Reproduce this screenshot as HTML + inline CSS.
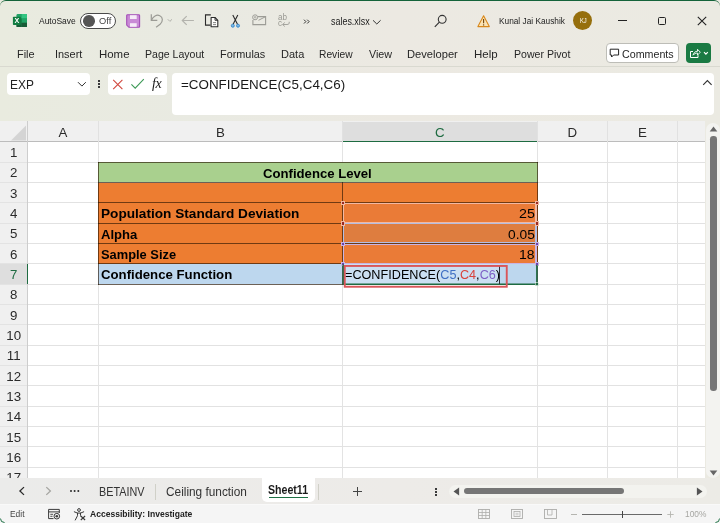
<!DOCTYPE html>
<html>
<head>
<meta charset="utf-8">
<title>sales.xlsx - Excel</title>
<style>
html,body{margin:0;padding:0;}
body{width:720px;height:523px;overflow:hidden;position:relative;background:linear-gradient(90deg,#e9ebdf 0,#e9eae2 28%,#ece9e2 55%,#ebeae2 100%);font-family:"Liberation Sans",sans-serif;color:#1f1f1f;}
.abs{position:absolute;}
.t{position:absolute;white-space:nowrap;line-height:1;}
#win{position:absolute;left:0;top:0;width:720px;height:523px;box-sizing:border-box;border-top:1.2px solid #14633a;border-radius:6px 6px 0 0;}
.tb{font-size:9.3px;color:#222;}
.menu{font-size:11.2px;color:#262626;top:49px;}
#sheet{position:absolute;left:0;top:121px;width:720px;height:360px;background:#fff;overflow:hidden;}
#colhdr{position:absolute;left:0;top:0;width:690px;height:21px;background:#f0f0f0;}
#rowhdr{position:absolute;left:0;top:0;width:27px;height:360px;background:#f0f0f0;}
.ch{position:absolute;top:0;height:21px;border-right:1px solid #d9d9d9;box-sizing:border-box;}
.cht{position:absolute;top:4px;font-size:13.5px;line-height:1;color:#333;white-space:nowrap;}
.rh{position:absolute;left:0;width:27px;height:20.3px;box-sizing:border-box;}
.rht{position:absolute;font-size:14px;line-height:1;color:#333;white-space:nowrap;}
.hl{position:absolute;left:27px;width:663px;height:1px;background:#e4e4e4;}
.vl{position:absolute;top:21px;height:340px;width:1px;background:#e4e4e4;}
.cell{position:absolute;font-size:13.4px;line-height:1;color:#000;white-space:nowrap;}
.b{font-weight:bold;}
</style>
</head>
<body>
<div id="root" style="position:absolute;left:0;top:0;width:720px;height:523px;will-change:transform;">
<div id="win"></div>

<!-- ===== Title bar ===== -->
<svg class="abs" style="left:12px;top:13px" width="16" height="15" viewBox="0 0 16 15">
  <rect x="4.5" y="1" width="10.5" height="13" rx="1.2" fill="#21a366"/>
  <rect x="9.7" y="1" width="5.3" height="4.4" fill="#33c481"/>
  <rect x="9.7" y="5.4" width="5.3" height="4.3" fill="#21a366"/>
  <rect x="9.7" y="9.7" width="5.3" height="4.3" fill="#185c37"/>
  <rect x="4.5" y="5.4" width="5.2" height="4.3" fill="#107c41"/>
  <rect x="4.5" y="9.7" width="5.2" height="4.3" fill="#185c37"/>
  <rect x="0.9" y="3.8" width="8" height="8.200" rx="0.8" fill="#107c41"/>
  <text x="4.9" y="10.3" font-size="7.2" font-weight="bold" fill="#fff" text-anchor="middle" font-family="Liberation Sans, sans-serif">X</text>
</svg>
<div class="t tb" id="t_autosave" style="left:39.3px;top:16.6px;left:39.02px;transform-origin:0 0;transform:scaleX(0.9097);">AutoSave</div>
<div class="abs" style="left:80.3px;top:12.5px;width:35.7px;height:16.3px;box-sizing:border-box;border:1px solid #4a4a4a;border-radius:9px;background:#fff;"></div>
<div class="abs" style="left:83.4px;top:15px;width:11.6px;height:11.6px;border-radius:50%;background:#555;"></div>
<div class="t tb" id="t_off" style="left:99px;top:16.6px;color:#444;left:98.72px;transform-origin:0 0;transform:scaleX(0.9997);">Off</div>

<!-- title bar icons (absolute coords) -->
<svg class="abs" style="left:0;top:0" width="720" height="40" viewBox="0 0 720 40">
  <!-- save -->
  <path d="M127.500 14.700h11.300a0.800 0.800 0 0 1 0.800 0.800v11a0.800 0.800 0 0 1-0.800 0.800h-9.900l-2.200-2.200v-9.600a0.800 0.800 0 0 1 0.800-0.800z" fill="#c98ad6" stroke="#a44fb8" stroke-width="1.100"/>
  <rect x="130" y="15.200" width="6.700" height="3.800" fill="#f6ebf8"/>
  <rect x="130" y="23.200" width="6.700" height="3.600" fill="#f6ebf8"/>
  <!-- undo -->
  <path d="M151.300 14.300v6h6" fill="none" stroke="#9b9b95" stroke-width="1.200"/>
  <path d="M151.600 20c1.500-3.500 5-5.800 8.200-4.300c3.300 1.600 3.400 5.800 0.300 8.600l-4 3" fill="none" stroke="#9b9b95" stroke-width="1.200"/>
  <path d="M167.800 19.300l2.100 2.100 2.100-2.100" fill="none" stroke="#b0b0aa" stroke-width="1"/>
  <!-- back -->
  <path d="M182.300 20.500h11.600M186.700 16.100l-4.400 4.400 4.400 4.400" fill="none" stroke="#b3b3ad" stroke-width="1.200"/>
  <!-- copy -->
  <path d="M210.500 25.100h-5v-10.200h5.300" fill="none" stroke="#2b2b2b" stroke-width="1.100"/>
  <path d="M211.100 17.500h3.900l2.800 2.800v6.500h-6.700z" fill="#fdfdfb" stroke="#2b2b2b" stroke-width="1.100" stroke-linejoin="round"/>
  <path d="M215 17.500v2.800h2.800" fill="none" stroke="#2b2b2b" stroke-width="0.900"/>
  <path d="M213 22.600h3M213 24.600h3" stroke="#777" stroke-width="0.900"/>
  <!-- cut -->
  <path d="M232.800 15l4.700 9.300M237.800 15l-4.700 9.300" fill="none" stroke="#2b2b2b" stroke-width="1.100"/>
  <circle cx="232.800" cy="25.700" r="1.500" fill="#7fbbe6" stroke="#3a8acb" stroke-width="1"/>
  <circle cx="238" cy="25.700" r="1.500" fill="#7fbbe6" stroke="#3a8acb" stroke-width="1"/>
  <!-- email -->
  <path d="M258 16.600h7.600v8h-12.700v-4.600" fill="none" stroke="#9c9c96" stroke-width="1.100"/>
  <path d="M258.500 20.300l6.800-3.500" fill="none" stroke="#9c9c96" stroke-width="1"/>
  <circle cx="255.100" cy="17.300" r="2.500" fill="none" stroke="#9c9c96" stroke-width="1"/>
  <circle cx="255.100" cy="17.300" r="0.800" fill="none" stroke="#9c9c96" stroke-width="0.800"/>
  <!-- abc arrow -->
  <path d="M289.200 21.800c0.300 2-0.500 2.700-2.200 2.700h-4.300M284.800 22.500l-2.200 2 2.200 2" fill="none" stroke="#9c9c96" stroke-width="0.900"/>
  <!-- >> -->
  <path d="M304 19.700l1.900 1.900-1.900 1.900M307.200 19.700l1.900 1.900-1.900 1.900" fill="none" stroke="#1c1c1c" stroke-width="0.900"/>
</svg>
<div class="t" style="left:278px;top:13.200px;font-size:9px;color:#989892;transform-origin:0 0;transform:scaleX(0.9);">ab</div>
<div class="t" style="left:278px;top:18.600px;font-size:9px;color:#989892;transform-origin:0 0;transform:scaleX(0.9);">c</div>
<div class="t" id="t_fname" style="left:330.8px;top:16.8px;font-size:10px;color:#222;left:330.78px;transform-origin:0 0;transform:scaleX(0.8933);">sales.xlsx</div>
<svg class="abs" style="left:372.300px;top:18.500px" width="10" height="7" viewBox="0 0 10 7">
  <path d="M1 1.300l3.800 3.700 3.800-3.700" fill="none" stroke="#333" stroke-width="1"/>
</svg>
<!-- search -->
<svg class="abs" style="left:433px;top:14px" width="16" height="15" viewBox="0 0 16 15">
  <circle cx="9.2" cy="5.300" r="3.900" fill="none" stroke="#333" stroke-width="1.1"/>
  <path d="M6.400 8.200l-4.600 4.600" stroke="#333" stroke-width="1.2"/>
</svg>
<!-- warning -->
<svg class="abs" style="left:476px;top:13.500px" width="15" height="14" viewBox="0 0 15 14">
  <path d="M7.600 1.700l5.700 10.900h-11.400z" fill="#fbe3b4" stroke="#d8871a" stroke-width="1.1" stroke-linejoin="round"/>
  <path d="M7.600 5v4.200" stroke="#6a4108" stroke-width="1.1"/>
  <circle cx="7.600" cy="10.900" r="0.700" fill="#6a4108"/>
</svg>
<div class="t tb" id="t_user" style="left:499.7px;top:16.6px;left:499.35px;transform-origin:0 0;transform:scaleX(0.8921);">Kunal Jai Kaushik</div>
<div class="abs" style="left:572.800px;top:10.800px;width:19.700px;height:19.700px;border-radius:50%;background:#966f0d;"></div>
<div class="t" id="t_kj" style="left:579.7px;top:17px;font-size:7.600px;color:#fff;left:579.83px;transform-origin:0 0;transform:scaleX(0.7619);">KJ</div>
<!-- window controls -->
<div class="abs" style="left:618px;top:19.800px;width:8.700px;height:1.100px;background:#222;"></div>
<div class="abs" style="left:657.800px;top:16.600px;width:8.500px;height:8.500px;box-sizing:border-box;border:1.1px solid #222;border-radius:1.500px;"></div>
<svg class="abs" style="left:697px;top:16px" width="10" height="10" viewBox="0 0 10 10">
  <path d="M0.800 0.800l8.400 8.400M9.200 0.800l-8.400 8.400" stroke="#222" stroke-width="1.100"/>
</svg>

<!-- ===== Menu ===== -->
<div class="t menu" id="m_file" style="left:17.6px;left:16.52px;transform-origin:0 0;transform:scaleX(0.9764);">File</div>
<div class="t menu" id="m_insert" style="left:56px;left:55.38px;transform-origin:0 0;transform:scaleX(0.9763);">Insert</div>
<div class="t menu" id="m_home" style="left:100px;left:99.40px;transform-origin:0 0;transform:scaleX(1.0218);">Home</div>
<div class="t menu" id="m_page" style="left:146px;left:145.40px;transform-origin:0 0;transform:scaleX(0.9431);">Page Layout</div>
<div class="t menu" id="m_form" style="left:221.700px;left:220.44px;transform-origin:0 0;transform:scaleX(0.9715);">Formulas</div>
<div class="t menu" id="m_data" style="left:282.200px;left:281.24px;transform-origin:0 0;transform:scaleX(0.9841);">Data</div>
<div class="t menu" id="m_review" style="left:320px;left:319.40px;transform-origin:0 0;transform:scaleX(0.9163);">Review</div>
<div class="t menu" id="m_view" style="left:369.400px;left:369.22px;transform-origin:0 0;transform:scaleX(0.9608);">View</div>
<div class="t menu" id="m_dev" style="left:408.300px;left:407.16px;transform-origin:0 0;transform:scaleX(0.9969);">Developer</div>
<div class="t menu" id="m_help" style="left:475px;left:474.40px;transform-origin:0 0;transform:scaleX(1.0276);">Help</div>
<div class="t menu" id="m_pp" style="left:514.400px;left:513.68px;transform-origin:0 0;transform:scaleX(0.9453);">Power Pivot</div>
<div class="abs" style="left:605.500px;top:43px;width:73px;height:19.500px;box-sizing:border-box;border:1px solid #bdbdb7;border-radius:4px;background:#fff;"></div>
<svg class="abs" style="left:609px;top:47.500px" width="11" height="10" viewBox="0 0 11 10">
  <path d="M1.200 1.200h8.400v5.800h-5l-2 2v-2h-1.400z" fill="none" stroke="#222" stroke-width="1" stroke-linejoin="round"/>
</svg>
<div class="t menu" id="m_comments" style="left:623px;left:622.42px;transform-origin:0 0;transform:scaleX(0.9556);">Comments</div>
<div class="abs" style="left:685.800px;top:43px;width:25.700px;height:19.500px;border-radius:4px;background:#1a7a43;"></div>
<svg class="abs" style="left:689px;top:47px" width="22" height="13" viewBox="0 0 22 13">
  <path d="M4 4.500h-2.500v6h7.500v-2.300" fill="none" stroke="#fff" stroke-width="1"/>
  <path d="M4 8.200c0.500-2.600 2.300-3.900 4.500-3.900v-2l2.800 2.900-2.800 2.900v-2c-1.800 0-3.200 0.500-4.500 2.100z" fill="none" stroke="#fff" stroke-width="0.900" stroke-linejoin="round"/>
  <path d="M15 5.200l1.900 1.900 1.900-1.900" fill="none" stroke="#fff" stroke-width="1.200"/>
</svg>
<!-- ===== Formula bar ===== -->
<div class="abs" style="left:0;top:65.6px;width:720px;height:1px;background:#d9d9d0;"></div>
<div class="abs" style="left:7px;top:72.700px;width:83.200px;height:22.500px;border-radius:4px;background:#fff;"></div>
<div class="t" id="f_exp" style="left:11.2px;top:77.5px;font-size:13.2px;color:#222;left:10.24px;transform-origin:0 0;transform:scaleX(0.9027);">EXP</div>
<svg class="abs" style="left:76.500px;top:81.400px" width="10" height="7" viewBox="0 0 10 7"><path d="M1 1.200l3.900 3.900 3.900-3.900" fill="none" stroke="#333" stroke-width="1"/></svg>
<div class="abs" style="left:97.500px;top:80px;width:2px;height:2px;background:#3a3a3a;box-shadow:0 3px 0 #3a3a3a,0 6px 0 #3a3a3a;"></div>
<div class="abs" style="left:107.800px;top:72.700px;width:59.300px;height:22.500px;border-radius:4px;background:#fff;"></div>
<svg class="abs" style="left:112px;top:79px" width="12" height="11" viewBox="0 0 12 11"><path d="M1.200 0.900l9.200 9.200M10.400 0.900l-9.200 9.200" stroke="#d0473e" stroke-width="1.100"/></svg>
<svg class="abs" style="left:130px;top:78px" width="15" height="12" viewBox="0 0 15 12"><path d="M1.400 6.300l3.800 3.800 8.600-8.900" fill="none" stroke="#3d9a57" stroke-width="1.100"/></svg>
<div class="t" id="f_fx" style="left:152px;top:76.600px;font-size:14px;font-family:'Liberation Serif',serif;font-style:italic;color:#1a1a1a;letter-spacing:-0.300px;">fx</div>
<div class="abs" style="left:171.800px;top:72.700px;width:542.600px;height:42.500px;border-radius:4px;background:#fff;"></div>
<div class="t" id="f_formula" style="left:181.700px;top:78.0px;font-size:13.5px;color:#1a1a1a;left:181.48px;transform-origin:0 0;transform:scaleX(0.9924);">=CONFIDENCE(C5,C4,C6)</div>
<svg class="abs" style="left:702px;top:79px" width="11" height="7" viewBox="0 0 11 7"><path d="M1.200 5.800l4.200-4.300 4.200 4.300" fill="none" stroke="#333" stroke-width="1.100"/></svg>
<!-- ===== Sheet ===== -->
<div id="sheet" style="top:121.0px;height:357.3px;background:transparent;">
<div class="abs" style="left:0;top:0;width:705px;height:360px;background:#fff;"></div>
<div class="abs" style="left:0;top:0;width:705px;height:20.9px;background:#f0f0f0;"></div>
<div class="abs" style="left:0;top:0;width:27.5px;height:360px;background:#f0f0f0;"></div>
<svg class="abs" style="left:9px;top:2.500px" width="18" height="18" viewBox="0 0 18 18"><path d="M17 1.500v15h-15z" fill="#d4d4d4"/></svg>
<div class="abs" style="left:0;top:20.4px;width:705px;height:1px;background:#bcbcbc;"></div>
<div class="abs" style="left:27px;top:0;width:1px;height:360px;background:#cdcdcd;"></div>
<div class="abs" style="left:343px;top:0.500px;width:194px;height:20.4px;background:#dedede;"></div>
<div class="abs" style="left:343px;top:20.1px;width:194px;height:1.300px;background:#1e6b41;"></div>
<div class="abs" style="left:98.0px;top:0;width:1px;height:20.9px;background:#e1e1e1;"></div>
<div class="cht" style="left:27.5px;width:71.0px;text-align:center;top:4.5px;font-size:13.3px;color:#2b2b2b;">A</div>
<div class="abs" style="left:342.0px;top:0;width:1px;height:20.9px;background:#e1e1e1;"></div>
<div class="cht" style="left:98.5px;width:244.0px;text-align:center;top:4.5px;font-size:13.3px;color:#2b2b2b;">B</div>
<div class="abs" style="left:536.5px;top:0;width:1px;height:20.9px;background:#e1e1e1;"></div>
<div class="cht" style="left:342.5px;width:194.5px;text-align:center;top:4.5px;font-size:13.3px;color:#1e6b41;">C</div>
<div class="abs" style="left:607.0px;top:0;width:1px;height:20.9px;background:#e1e1e1;"></div>
<div class="cht" style="left:537px;width:70.5px;text-align:center;top:4.5px;font-size:13.3px;color:#2b2b2b;">D</div>
<div class="abs" style="left:677.0px;top:0;width:1px;height:20.9px;background:#e1e1e1;"></div>
<div class="cht" style="left:607.5px;width:70.0px;text-align:center;top:4.5px;font-size:13.3px;color:#2b2b2b;">E</div>
<div class="abs" style="left:98.0px;top:20.9px;width:1px;height:340px;background:#e3e3e3;"></div>
<div class="abs" style="left:342.0px;top:20.9px;width:1px;height:340px;background:#e3e3e3;"></div>
<div class="abs" style="left:536.5px;top:20.9px;width:1px;height:340px;background:#e3e3e3;"></div>
<div class="abs" style="left:607.0px;top:20.9px;width:1px;height:340px;background:#e3e3e3;"></div>
<div class="abs" style="left:677.0px;top:20.9px;width:1px;height:340px;background:#e3e3e3;"></div>
<div class="abs" style="left:27.500px;top:40.7px;width:677.500px;height:1px;background:#e2e2e2;"></div>
<div class="abs" style="left:0;top:40.7px;width:27px;height:1px;background:#e3e3e3;"></div>
<div class="abs" style="left:27.500px;top:61.1px;width:677.500px;height:1px;background:#e2e2e2;"></div>
<div class="abs" style="left:0;top:61.1px;width:27px;height:1px;background:#e3e3e3;"></div>
<div class="abs" style="left:27.500px;top:81.4px;width:677.500px;height:1px;background:#e2e2e2;"></div>
<div class="abs" style="left:0;top:81.4px;width:27px;height:1px;background:#e3e3e3;"></div>
<div class="abs" style="left:27.500px;top:101.7px;width:677.500px;height:1px;background:#e2e2e2;"></div>
<div class="abs" style="left:0;top:101.7px;width:27px;height:1px;background:#e3e3e3;"></div>
<div class="abs" style="left:27.500px;top:122.1px;width:677.500px;height:1px;background:#e2e2e2;"></div>
<div class="abs" style="left:0;top:122.1px;width:27px;height:1px;background:#e3e3e3;"></div>
<div class="abs" style="left:27.500px;top:142.4px;width:677.500px;height:1px;background:#e2e2e2;"></div>
<div class="abs" style="left:0;top:142.4px;width:27px;height:1px;background:#e3e3e3;"></div>
<div class="abs" style="left:27.500px;top:162.7px;width:677.500px;height:1px;background:#e2e2e2;"></div>
<div class="abs" style="left:0;top:162.7px;width:27px;height:1px;background:#e3e3e3;"></div>
<div class="abs" style="left:27.500px;top:183.0px;width:677.500px;height:1px;background:#e2e2e2;"></div>
<div class="abs" style="left:0;top:183.0px;width:27px;height:1px;background:#e3e3e3;"></div>
<div class="abs" style="left:27.500px;top:203.4px;width:677.500px;height:1px;background:#e2e2e2;"></div>
<div class="abs" style="left:0;top:203.4px;width:27px;height:1px;background:#e3e3e3;"></div>
<div class="abs" style="left:27.500px;top:223.7px;width:677.500px;height:1px;background:#e2e2e2;"></div>
<div class="abs" style="left:0;top:223.7px;width:27px;height:1px;background:#e3e3e3;"></div>
<div class="abs" style="left:27.500px;top:244.0px;width:677.500px;height:1px;background:#e2e2e2;"></div>
<div class="abs" style="left:0;top:244.0px;width:27px;height:1px;background:#e3e3e3;"></div>
<div class="abs" style="left:27.500px;top:264.4px;width:677.500px;height:1px;background:#e2e2e2;"></div>
<div class="abs" style="left:0;top:264.4px;width:27px;height:1px;background:#e3e3e3;"></div>
<div class="abs" style="left:27.500px;top:284.7px;width:677.500px;height:1px;background:#e2e2e2;"></div>
<div class="abs" style="left:0;top:284.7px;width:27px;height:1px;background:#e3e3e3;"></div>
<div class="abs" style="left:27.500px;top:305.0px;width:677.500px;height:1px;background:#e2e2e2;"></div>
<div class="abs" style="left:0;top:305.0px;width:27px;height:1px;background:#e3e3e3;"></div>
<div class="abs" style="left:27.500px;top:325.4px;width:677.500px;height:1px;background:#e2e2e2;"></div>
<div class="abs" style="left:0;top:325.4px;width:27px;height:1px;background:#e3e3e3;"></div>
<div class="abs" style="left:27.500px;top:345.7px;width:677.500px;height:1px;background:#e2e2e2;"></div>
<div class="abs" style="left:0;top:345.7px;width:27px;height:1px;background:#e3e3e3;"></div>
<div class="abs" style="left:27.500px;top:366.0px;width:677.500px;height:1px;background:#e2e2e2;"></div>
<div class="abs" style="left:0;top:366.0px;width:27px;height:1px;background:#e3e3e3;"></div>
<div class="abs" style="left:0;top:142.9px;width:27px;height:20.3px;background:#dedede;"></div>
<div class="abs" style="left:26.700px;top:142.9px;width:1.300px;height:20.3px;background:#1e6b41;"></div>
<div class="rht" style="left:0;width:27.5px;text-align:center;top:25.1px;font-size:13.3px;color:#2b2b2b;">1</div>
<div class="rht" style="left:0;width:27.5px;text-align:center;top:45.4px;font-size:13.3px;color:#2b2b2b;">2</div>
<div class="rht" style="left:0;width:27.5px;text-align:center;top:65.7px;font-size:13.3px;color:#2b2b2b;">3</div>
<div class="rht" style="left:0;width:27.5px;text-align:center;top:86.1px;font-size:13.3px;color:#2b2b2b;">4</div>
<div class="rht" style="left:0;width:27.5px;text-align:center;top:106.4px;font-size:13.3px;color:#2b2b2b;">5</div>
<div class="rht" style="left:0;width:27.5px;text-align:center;top:126.7px;font-size:13.3px;color:#2b2b2b;">6</div>
<div class="rht" style="left:0;width:27.5px;text-align:center;top:147.1px;font-size:13.3px;color:#1e6b41;">7</div>
<div class="rht" style="left:0;width:27.5px;text-align:center;top:167.4px;font-size:13.3px;color:#2b2b2b;">8</div>
<div class="rht" style="left:0;width:27.5px;text-align:center;top:187.7px;font-size:13.3px;color:#2b2b2b;">9</div>
<div class="rht" style="left:0;width:27.5px;text-align:center;top:208.0px;font-size:13.3px;color:#2b2b2b;">10</div>
<div class="rht" style="left:0;width:27.5px;text-align:center;top:228.4px;font-size:13.3px;color:#2b2b2b;">11</div>
<div class="rht" style="left:0;width:27.5px;text-align:center;top:248.7px;font-size:13.3px;color:#2b2b2b;">12</div>
<div class="rht" style="left:0;width:27.5px;text-align:center;top:269.0px;font-size:13.3px;color:#2b2b2b;">13</div>
<div class="rht" style="left:0;width:27.5px;text-align:center;top:289.4px;font-size:13.3px;color:#2b2b2b;">14</div>
<div class="rht" style="left:0;width:27.5px;text-align:center;top:309.7px;font-size:13.3px;color:#2b2b2b;">15</div>
<div class="rht" style="left:0;width:27.5px;text-align:center;top:330.0px;font-size:13.3px;color:#2b2b2b;">16</div>
<div class="rht" style="left:0;width:27.5px;text-align:center;top:350.4px;font-size:13.3px;color:#2b2b2b;">17</div>
<div class="abs" style="left:98px;top:41.2px;width:439.5px;height:20.3px;background:#a9d08e;"></div>
<div class="abs" style="left:98px;top:61.6px;width:439.5px;height:81.3px;background:#ed7d31;"></div>
<div class="abs" style="left:98px;top:142.9px;width:439.5px;height:20.3px;background:#bdd7ee;"></div>
<div class="abs" style="left:343px;top:81.9px;width:194px;height:20.3px;background:#ea7b37;"></div>
<div class="abs" style="left:343px;top:122.6px;width:194px;height:20.3px;background:#ea7b37;"></div>
<div class="abs" style="left:343px;top:102.2px;width:194px;height:20.3px;background:#de7d3f;"></div>
<div class="abs" style="left:98px;top:40.7px;width:439.5px;height:1px;background:rgba(35,18,0,0.62);"></div>
<div class="abs" style="left:98px;top:61.1px;width:439.5px;height:1px;background:rgba(35,18,0,0.62);"></div>
<div class="abs" style="left:98px;top:81.4px;width:439.5px;height:1px;background:rgba(35,18,0,0.62);"></div>
<div class="abs" style="left:98px;top:101.7px;width:439.5px;height:1px;background:rgba(35,18,0,0.62);"></div>
<div class="abs" style="left:98px;top:122.1px;width:439.5px;height:1px;background:rgba(35,18,0,0.62);"></div>
<div class="abs" style="left:98px;top:142.4px;width:439.5px;height:1px;background:rgba(35,18,0,0.62);"></div>
<div class="abs" style="left:98px;top:162.7px;width:439.5px;height:1px;background:rgba(35,18,0,0.62);"></div>
<div class="abs" style="left:98px;top:40.7px;width:1px;height:123.0px;background:rgba(35,18,0,0.62);"></div>
<div class="abs" style="left:536.5px;top:40.7px;width:1px;height:123.0px;background:rgba(35,18,0,0.62);"></div>
<div class="abs" style="left:342px;top:61.1px;width:1px;height:102.6px;background:rgba(35,18,0,0.62);"></div>
<div class="abs" style="left:342.500px;top:102.2px;width:194.500px;height:20.3px;box-sizing:border-box;border:1px solid #b4bfe2;border-right:2px solid #b4bfe2;"></div>
<div class="abs" style="left:340.7px;top:100.4px;width:2.200px;height:2.200px;background:#4a55b0;border:0.700px solid #b4bfe2;"></div>
<div class="abs" style="left:534.7px;top:100.4px;width:2.200px;height:2.200px;background:#4a55b0;border:0.700px solid #b4bfe2;"></div>
<div class="abs" style="left:340.7px;top:120.8px;width:2.200px;height:2.200px;background:#4a55b0;border:0.700px solid #b4bfe2;"></div>
<div class="abs" style="left:534.7px;top:120.8px;width:2.200px;height:2.200px;background:#4a55b0;border:0.700px solid #b4bfe2;"></div>
<div class="abs" style="left:342.500px;top:122.6px;width:194.500px;height:20.3px;box-sizing:border-box;border:1px solid #c9b4e2;border-right:2px solid #c9b4e2;"></div>
<div class="abs" style="left:340.7px;top:120.8px;width:2.200px;height:2.200px;background:#6a45b0;border:0.700px solid #c9b4e2;"></div>
<div class="abs" style="left:534.7px;top:120.8px;width:2.200px;height:2.200px;background:#6a45b0;border:0.700px solid #c9b4e2;"></div>
<div class="abs" style="left:340.7px;top:141.1px;width:2.200px;height:2.200px;background:#6a45b0;border:0.700px solid #c9b4e2;"></div>
<div class="abs" style="left:534.7px;top:141.1px;width:2.200px;height:2.200px;background:#6a45b0;border:0.700px solid #c9b4e2;"></div>
<div class="abs" style="left:342.500px;top:81.9px;width:194.500px;height:20.3px;box-sizing:border-box;border:1px solid #f3b8a2;border-right:2px solid #f3b8a2;"></div>
<div class="abs" style="left:340.7px;top:80.1px;width:2.200px;height:2.200px;background:#9a2a22;border:0.700px solid #f3b8a2;"></div>
<div class="abs" style="left:534.7px;top:80.1px;width:2.200px;height:2.200px;background:#9a2a22;border:0.700px solid #f3b8a2;"></div>
<div class="abs" style="left:340.7px;top:100.4px;width:2.200px;height:2.200px;background:#9a2a22;border:0.700px solid #f3b8a2;"></div>
<div class="abs" style="left:534.7px;top:100.4px;width:2.200px;height:2.200px;background:#9a2a22;border:0.700px solid #f3b8a2;"></div>
<div class="abs" style="left:343.500px;top:143.4px;width:156px;height:19.3px;background:#cbdff2;"></div>
<svg class="abs" style="left:340px;top:139.0px" width="200" height="28" viewBox="340 260 200 28"><path d="M343.200 264.38V284.21H536.850V265.08" fill="none" stroke="#1e6b41" stroke-width="1.500"/><rect x="535.300" y="282.61" width="3" height="3" fill="#1e6b41" stroke="#fff" stroke-width="0.500"/></svg>
<div class="cell b" id="c_title" style="left:263.9px;top:45.6px;font-size:13.2px;left:263.45px;transform-origin:0 0;transform:scaleX(0.9959);">Confidence Level</div>
<div class="cell b" id="c_b4" style="left:101.5px;top:86.2px;font-size:13.2px;left:100.60px;transform-origin:0 0;transform:scaleX(1.0336);">Population Standard Deviation</div>
<div class="cell b" id="c_b5" style="left:101.5px;top:106.6px;font-size:13.2px;left:101.27px;transform-origin:0 0;transform:scaleX(0.9926);">Alpha</div>
<div class="cell b" id="c_b6" style="left:101.5px;top:126.9px;font-size:13.2px;left:101.49px;transform-origin:0 0;transform:scaleX(0.9750);">Sample Size</div>
<div class="cell b" id="c_b7" style="left:101.5px;top:147.2px;font-size:13.2px;left:101.15px;transform-origin:0 0;transform:scaleX(1.0007);">Confidence Function</div>
<div class="cell" id="c_c4" style="left:519.3px;top:86.2px;font-size:13.2px;left:519.07px;transform-origin:0 0;transform:scaleX(1.0797);">25</div>
<div class="cell" id="c_c5" style="left:507.8px;top:106.6px;font-size:13.2px;left:507.56px;transform-origin:0 0;transform:scaleX(1.0440);">0.05</div>
<div class="cell" id="c_c6" style="left:519.9px;top:126.9px;font-size:13.2px;left:518.75px;transform-origin:0 0;transform:scaleX(1.0599);">18</div>
<div class="cell" id="c_c7" style="left:345px;top:147.2px;font-size:13.2px;left:344.91px;transform-origin:0 0;transform:scaleX(0.9594);">=CONFIDENCE(<span style="color:#3f6fc4">C5</span>,<span style="color:#d9433c">C4</span>,<span style="color:#7d5fc6">C6</span>)</div>
<div class="abs" style="left:499.200px;top:144.4px;width:0.900px;height:18.500px;background:#2a2f3a;"></div>
<svg class="abs" style="left:340px;top:141.0px" width="172" height="30" viewBox="340 262 172 30"><rect x="344.750" y="265.950" width="162" height="20.800" fill="none" stroke="#d9565a" stroke-width="1.900"/></svg>
<div class="abs" style="left:706px;top:1.500px;width:14px;height:355.8px;background:#f3f3f0;border-radius:7px;"></div>
<svg class="abs" style="left:709px;top:4.500px" width="9" height="6" viewBox="0 0 9 6"><path d="M4.500 0.600l3.800 4.800h-7.600z" fill="#666"/></svg>
<div class="abs" style="left:710.300px;top:15.0px;width:6.400px;height:255px;background:#767676;border-radius:3.200px;"></div>
<svg class="abs" style="left:709px;top:348.5px" width="9" height="6" viewBox="0 0 9 6"><path d="M4.500 5.400l3.800-4.800h-7.600z" fill="#666"/></svg>
</div>
<!-- ===== Sheet tabs ===== -->
<div class="abs" style="left:0;top:478.300px;width:720px;height:26px;background:linear-gradient(90deg,#ebebea 0,#edebe8 55%,#ecebe6 100%);"></div>
<svg class="abs" style="left:10px;top:480px" width="50" height="22" viewBox="10 480 50 22"><path d="M24 487.100l-4.100 3.900 4.100 3.900" fill="none" stroke="#2a2a2a" stroke-width="1.300"/><path d="M46.300 487.100l4.100 3.900-4.100 3.900" fill="none" stroke="#a5a5a1" stroke-width="1.300"/></svg>
<div class="abs" style="left:69.800px;top:490px;width:2.100px;height:2.100px;border-radius:50%;background:#2a2a2a;box-shadow:3.650px 0 0 #2a2a2a,7.300px 0 0 #2a2a2a;"></div>
<div class="t" id="s_beta" style="left:99.400px;top:485.9px;font-size:12.4px;color:#333;left:98.68px;transform-origin:0 0;transform:scaleX(0.8721);">BETAINV</div>
<div class="abs" style="left:154.700px;top:484px;width:1px;height:16px;background:#d0d0c8;"></div>
<div class="t" id="s_ceil" style="left:166.300px;top:485.9px;font-size:12.4px;color:#333;left:166.27px;transform-origin:0 0;transform:scaleX(0.9551);">Ceiling function</div>
<div class="abs" style="left:262.200px;top:478px;width:52.800px;height:24px;background:#fff;border-radius:0 0 5px 5px;"></div>
<div class="t b" id="s_sheet" style="left:269.100px;top:483.8px;font-size:12.4px;color:#1a1a1a;font-weight:bold;left:268.26px;transform-origin:0 0;transform:scaleX(0.8553);">Sheet11</div>
<div class="abs" style="left:269px;top:496.700px;width:39px;height:1.500px;background:#1e7145;"></div>
<div class="abs" style="left:317.700px;top:484px;width:1px;height:16px;background:#d0d0c8;"></div>
<svg class="abs" style="left:352px;top:486px" width="11" height="11" viewBox="0 0 11 11"><path d="M5.500 1v9M1 5.500h9" stroke="#444" stroke-width="1"/></svg>
<div class="abs" style="left:435.400px;top:487.500px;width:2px;height:2px;background:#3a3a3a;box-shadow:0 3px 0 #3a3a3a,0 6px 0 #3a3a3a;"></div>
<div class="abs" style="left:449px;top:484.700px;width:257.500px;height:13px;background:#f3f3ef;border-radius:6.500px;"></div>
<svg class="abs" style="left:453px;top:487px" width="7" height="9" viewBox="0 0 7 9"><path d="M0.500 4.500l5.600-3.900v7.800z" fill="#555"/></svg>
<div class="abs" style="left:463.600px;top:487.900px;width:160.800px;height:6.500px;background:#767676;border-radius:3.300px;"></div>
<svg class="abs" style="left:696px;top:487px" width="7" height="9" viewBox="0 0 7 9"><path d="M6.500 4.500l-5.600-3.900v7.800z" fill="#555"/></svg>
<!-- ===== Status bar ===== -->
<div class="abs" style="left:0;top:504px;width:720px;height:19px;background:#f5f5f5;border-top:1px solid #f9f9f9;box-sizing:border-box;"></div>
<div class="t" id="st_edit" style="left:9.700px;top:510.0px;font-size:9.2px;color:#444;left:9.57px;transform-origin:0 0;transform:scaleX(0.9151);">Edit</div>
<svg class="abs" style="left:40px;top:504px" width="60" height="19" viewBox="40 504 60 19">
  <path d="M53.500 518.600h-4.900v-9.200h10.700v3.600" fill="none" stroke="#3a3a3a" stroke-width="1"/>
  <path d="M48.600 511.900h10.700" stroke="#3a3a3a" stroke-width="1"/>
  <path d="M50.300 514.300h2.800M50.300 516.300h2.200" stroke="#3a3a3a" stroke-width="0.900"/>
  <circle cx="56.800" cy="516.200" r="2.800" fill="#f5f5f5" stroke="#3a3a3a" stroke-width="1"/>
  <circle cx="56.800" cy="516.200" r="1.300" fill="#3a3a3a"/>
  <circle cx="79" cy="510" r="1.400" fill="none" stroke="#3a3a3a" stroke-width="1"/>
  <path d="M74.300 511.800l3.200 1.300h3l3.200-1.300M77.500 513.100v2.600l-2.200 4.300M80.500 513.100v2.400l0.800 1.300" fill="none" stroke="#3a3a3a" stroke-width="1" stroke-linejoin="round" stroke-linecap="round"/>
  <path d="M80.800 516l4.300 4M85.100 516l-4.300 4" stroke="#3a3a3a" stroke-width="1.100"/>
</svg>
<div class="t" id="st_acc" style="left:88.900px;top:510.0px;font-size:9.2px;color:#222;font-weight:bold;left:89.80px;transform-origin:0 0;transform:scaleX(0.9317);">Accessibility: Investigate</div>
<svg class="abs" style="left:477.500px;top:508.500px" width="12" height="10" viewBox="0 0 12 10">
  <rect x="0.500" y="0.500" width="11" height="9" fill="none" stroke="#adadab" stroke-width="0.900"/>
  <path d="M4.200 0.500v9M7.800 0.500v9M0.500 3.500h11M0.500 6.500h11" stroke="#adadab" stroke-width="0.800"/>
</svg>
<svg class="abs" style="left:511px;top:508.500px" width="12" height="10" viewBox="0 0 12 10">
  <rect x="0.500" y="0.500" width="11" height="9" fill="none" stroke="#adadab" stroke-width="0.900"/>
  <rect x="3" y="2.500" width="6" height="5" fill="none" stroke="#adadab" stroke-width="0.800"/>
  <path d="M4.500 4.300h3M4.500 5.800h3" stroke="#adadab" stroke-width="0.600"/>
</svg>
<svg class="abs" style="left:543.500px;top:508.500px" width="13" height="10" viewBox="0 0 13 10">
  <rect x="0.500" y="0.500" width="12" height="9" fill="none" stroke="#adadab" stroke-width="0.900"/>
  <path d="M3.500 0.500v5.500h4.500v-5.500" fill="none" stroke="#adadab" stroke-width="0.800"/>
</svg>
<div class="abs" style="left:571px;top:513.500px;width:6px;height:1px;background:#b5b5b0;"></div>
<div class="abs" style="left:582.200px;top:513.500px;width:80px;height:1px;background:#6a6a6a;"></div>
<div class="abs" style="left:621.800px;top:510.500px;width:1px;height:7px;background:#444;"></div>
<svg class="abs" style="left:667px;top:510.500px" width="7" height="7" viewBox="0 0 7 7"><path d="M3.500 0.300v6.400M0.300 3.500h6.400" stroke="#b5b5b0" stroke-width="0.900"/></svg>
<div class="t" id="st_zoom" style="left:685.300px;top:509.7px;font-size:9.2px;color:#a6a6a2;left:685.01px;transform-origin:0 0;transform:scaleX(0.9112);">100%</div>
<div class="abs" style="left:0;top:513.800px;width:9.300px;height:9.300px;box-sizing:border-box;border:1.500px solid #1e7145;border-radius:50%;clip-path:polygon(0 50%,50% 50%,50% 100%,0 100%);"></div>
<div class="abs" style="left:710.700px;top:513.800px;width:9.300px;height:9.300px;box-sizing:border-box;border:1.500px solid #1e7145;border-radius:50%;clip-path:polygon(50% 50%,100% 50%,100% 100%,50% 100%);"></div>
</div>
</body>
</html>
